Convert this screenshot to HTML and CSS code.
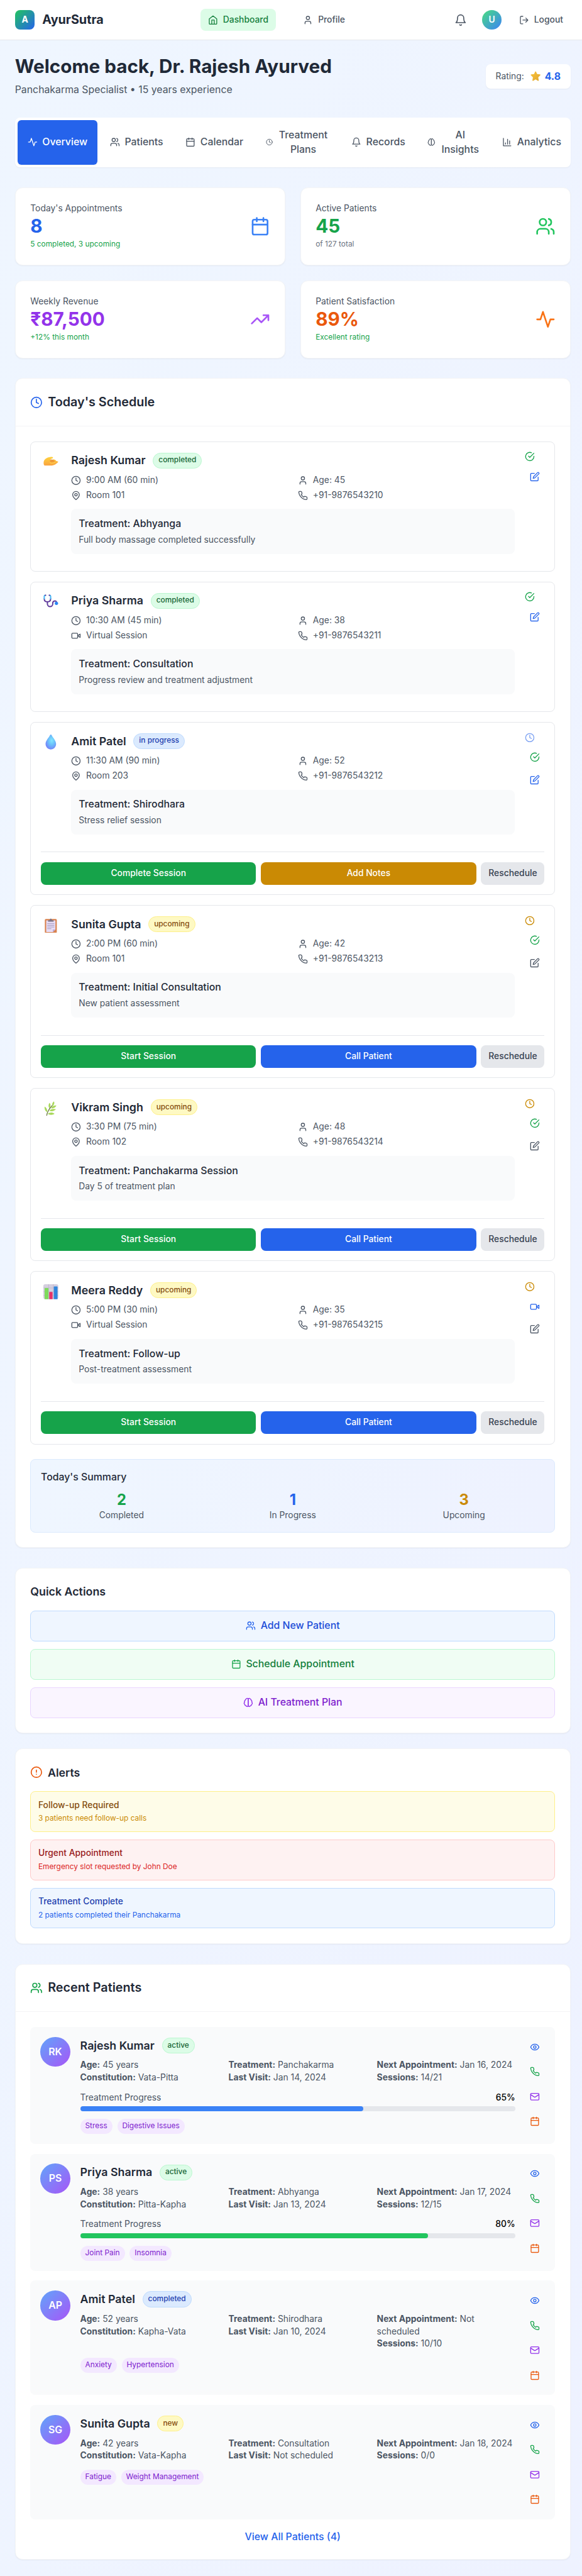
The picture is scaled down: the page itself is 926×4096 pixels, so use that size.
FILE: index.html
```html
<!DOCTYPE html>
<html lang="en">
<head>
<meta charset="utf-8">
<title>AyurSutra</title>
<link rel="stylesheet" href="styles.css">
</head>
<body>
<svg class="sprite" aria-hidden="true">
  <symbol id="home" viewBox="0 0 24 24"><path d="m3 9 9-7 9 7v11a2 2 0 0 1-2 2H5a2 2 0 0 1-2-2z"/><path d="M9 22V12h6v10"/></symbol>
  <symbol id="user" viewBox="0 0 24 24"><path d="M19 21v-2a4 4 0 0 0-4-4H9a4 4 0 0 0-4 4v2"/><circle cx="12" cy="7" r="4"/></symbol>
  <symbol id="users" viewBox="0 0 24 24"><path d="M16 21v-2a4 4 0 0 0-4-4H6a4 4 0 0 0-4 4v2"/><circle cx="9" cy="7" r="4"/><path d="M22 21v-2a4 4 0 0 0-3-3.87M16 3.13a4 4 0 0 1 0 7.75"/></symbol>
  <symbol id="bell" viewBox="0 0 24 24"><path d="M6 8a6 6 0 0 1 12 0c0 7 3 9 3 9H3s3-2 3-9"/><path d="M10.3 21a1.94 1.94 0 0 0 3.4 0"/></symbol>
  <symbol id="logout" viewBox="0 0 24 24"><path d="M9 21H5a2 2 0 0 1-2-2V5a2 2 0 0 1 2-2h4M16 17l5-5-5-5M21 12H9"/></symbol>
  <symbol id="activity" viewBox="0 0 24 24"><path d="M22 12h-4l-3 9L9 3l-3 9H2"/></symbol>
  <symbol id="calendar" viewBox="0 0 24 24"><rect x="3" y="4" width="18" height="18" rx="2"/><path d="M16 2v4M8 2v4M3 10h18"/></symbol>
  <symbol id="clock" viewBox="0 0 24 24"><circle cx="12" cy="12" r="10"/><path d="M12 6v6l4 2"/></symbol>
  <symbol id="brain" viewBox="0 0 24 24"><path d="M9.5 2A2.5 2.5 0 0 1 12 4.5v15a2.5 2.5 0 0 1-4.96.44 2.5 2.5 0 0 1-2.96-3.08 3 3 0 0 1-.34-5.58 2.5 2.5 0 0 1 1.32-4.24 2.5 2.5 0 0 1 1.98-3A2.5 2.5 0 0 1 9.5 2Z"/><path d="M14.5 2A2.5 2.5 0 0 0 12 4.5v15a2.5 2.5 0 0 0 4.96.44 2.5 2.5 0 0 0 2.96-3.08 3 3 0 0 0 .34-5.58 2.5 2.5 0 0 0-1.32-4.24 2.5 2.5 0 0 0-1.98-3A2.5 2.5 0 0 0 14.5 2Z"/></symbol>
  <symbol id="chart" viewBox="0 0 24 24"><path d="M3 3v18h18M18 17V9M13 17V5M8 17v-3"/></symbol>
  <symbol id="trend" viewBox="0 0 24 24"><path d="m22 7-8.500 8.500-5-5L2 17M16 7h6v6"/></symbol>
  <symbol id="pin" viewBox="0 0 24 24"><path d="M20 10c0 6-8 12-8 12s-8-6-8-12a8 8 0 0 1 16 0Z"/><circle cx="12" cy="10" r="3"/></symbol>
  <symbol id="phone" viewBox="0 0 24 24"><path d="M22 16.920v3a2 2 0 0 1-2.180 2 19.790 19.790 0 0 1-8.630-3.070 19.500 19.500 0 0 1-6-6 19.790 19.790 0 0 1-3.070-8.670A2 2 0 0 1 4.110 2h3a2 2 0 0 1 2 1.720 12.840 12.840 0 0 0 .7 2.810 2 2 0 0 1-.45 2.110L8.090 9.910a16 16 0 0 0 6 6l1.270-1.270a2 2 0 0 1 2.110-.45 12.840 12.840 0 0 0 2.810.7A2 2 0 0 1 22 16.920z"/></symbol>
  <symbol id="video" viewBox="0 0 24 24"><path d="m22 8-6 4 6 4V8Z"/><rect x="2" y="6" width="14" height="12" rx="2"/></symbol>
  <symbol id="check" viewBox="0 0 24 24"><path d="M22 11.080V12a10 10 0 1 1-5.930-9.140"/><path d="m22 4-10 10.010-3-3"/></symbol>
  <symbol id="edit" viewBox="0 0 24 24"><path d="M11 4H4a2 2 0 0 0-2 2v14a2 2 0 0 0 2 2h14a2 2 0 0 0 2-2v-7"/><path d="M18.500 2.500a2.120 2.120 0 0 1 3 3L12 15l-4 1 1-4Z"/></symbol>
  <symbol id="alert" viewBox="0 0 24 24"><circle cx="12" cy="12" r="10"/><path d="M12 8v4M12 16h.01"/></symbol>
  <symbol id="eye" viewBox="0 0 24 24"><path d="M2 12s3-7 10-7 10 7 10 7-3 7-10 7-10-7-10-7Z"/><circle cx="12" cy="12" r="3"/></symbol>
  <symbol id="mail" viewBox="0 0 24 24"><rect x="2" y="4" width="20" height="16" rx="2"/><path d="m22 7-8.970 5.700a1.940 1.940 0 0 1-2.060 0L2 7"/></symbol>
</svg>

<header class="topbar">
  <div class="brand"><span class="logo">A</span><span class="brand-name">AyurSutra</span></div>
  <nav class="nav">
    <a class="nav-link current"><svg class="i"><use href="#home"/></svg>Dashboard</a>
    <a class="nav-link"><svg class="i"><use href="#user"/></svg>Profile</a>
  </nav>
  <div class="account">
    <span class="bell"><svg class="i i20"><use href="#bell"/></svg></span>
    <span class="me">U</span>
    <a class="nav-link"><svg class="i"><use href="#logout"/></svg>Logout</a>
  </div>
</header>

<main class="page">
  <section class="welcome">
    <div>
      <h1>Welcome back, Dr. Rajesh Ayurved</h1>
      <p>Panchakarma Specialist • 15 years experience</p>
    </div>
    <div class="rating">
      <span>Rating:</span>
      <svg class="star" viewBox="0 0 24 24"><defs><linearGradient id="gs" x1="0" y1="0" x2="1" y2="1"><stop offset="0" stop-color="#f9c23c"/><stop offset="1" stop-color="#e0a72e"/></linearGradient></defs><path d="M10.900 1.500c.5-1 1.700-1 2.200 0l2.500 5.500 6.600.8c1.100.2 1.500 1.400.7 2.200l-4.700 4.600 1.200 6.700c.2 1.100-.9 1.900-1.900 1.400L12 19.400l-5.500 3.300c-1 .5-2.100-.3-1.900-1.400l1.200-6.700L1.100 10c-.8-.8-.4-2 .7-2.200l6.600-.8z" fill="url(#gs)"/></svg>
      <b>4.8</b>
    </div>
  </section>

  <nav class="tabs">
    <a class="tab on"><svg class="i"><use href="#activity"/></svg>Overview</a>
    <a class="tab"><svg class="i"><use href="#users"/></svg>Patients</a>
    <a class="tab"><svg class="i"><use href="#calendar"/></svg>Calendar</a>
    <a class="tab"><svg class="i i11"><use href="#clock"/></svg><span class="wide">Treatment Plans</span></a>
    <a class="tab"><svg class="i"><use href="#bell"/></svg>Records</a>
    <a class="tab"><svg class="i i12"><use href="#brain"/></svg><span class="narrow">AI Insights</span></a>
    <a class="tab"><svg class="i"><use href="#chart"/></svg>Analytics</a>
  </nav>

  <section class="stats">
    <div class="card stat"><div><p>Today's Appointments</p><strong class="blue">8</strong><small class="green">5 completed, 3 upcoming</small></div><svg class="i i32 blue5"><use href="#calendar"/></svg></div>
    <div class="card stat"><div><p>Active Patients</p><strong class="green">45</strong><small class="gray5">of 127 total</small></div><svg class="i i32 green5"><use href="#users"/></svg></div>
    <div class="card stat"><div><p>Weekly Revenue</p><strong class="purple">₹87,500</strong><small class="green">+12% this month</small></div><svg class="i i32 purple5"><use href="#trend"/></svg></div>
    <div class="card stat"><div><p>Patient Satisfaction</p><strong class="orange">89%</strong><small class="green">Excellent rating</small></div><svg class="i i32 orange5"><use href="#activity"/></svg></div>
  </section>

  <section class="card schedule">
    <h2 class="card-head"><svg class="i i20 blue"><use href="#clock"/></svg>Today's Schedule</h2>
    <div class="card-body">
      <div class="visits">
      <article class="visit">
        <div class="visit-row">
          <div class="emoji"><svg viewBox="0 0 24 24"><defs><linearGradient id="gh" x1="0" y1="0" x2="0" y2="1"><stop offset="0" stop-color="#ffd23e"/><stop offset="1" stop-color="#f9a33f"/></linearGradient></defs><path d="M.4 14C.6 9 4 6.500 8 5.300c2.500-.8 5.200-1.100 6.800-.4 1.200.6.8 2-.4 2.200-1.500.3-2.600.6-3 1.400l.3 1.500 4-1.300c2-.3 4.300.8 4.900 2.300 1.300.1 2.900.6 3.200 1.300.2.900-2.300 2.700-4.700 4.300-2 1.300-4.300 1.800-7 1.800H2c-1.300-.6-1.700-2.600-1.600-4.400z" fill="url(#gh)"/><path d="M10.500 10.800c1.200-2.200 2-2.600 2.600-2.200s.6.700 1.200.4.900.3 1.300.3.900.8 1.500.8.700 1.300 1.800 1.500l-3 1.300h-2.800c-1.300 0-2.500-.7-2.600-2.100z" fill="#e88a35" opacity=".75"/><path d="M10.500 13.500c2.500 2 6 1 9-.8" fill="none" stroke="#ffe05a" stroke-width=".8"/></svg></div>
          <div class="visit-main">
            <div class="who"><h3>Rajesh Kumar</h3><span class="badge b-green">completed</span></div>
            <div class="facts"><span><svg class="i"><use href="#clock"/></svg>9:00 AM (60 min)</span><span><svg class="i"><use href="#user"/></svg>Age: 45</span><span><svg class="i"><use href="#pin"/></svg>Room 101</span><span><svg class="i"><use href="#phone"/></svg>+91-9876543210</span></div>
            <div class="note"><h4>Treatment: Abhyanga</h4><p>Full body massage completed successfully</p></div>
          </div>
          <div class="side"><svg class="i green"><use href="#check"/></svg><div class="tools"><a class="blue"><svg class="i"><use href="#edit"/></svg></a></div></div>
        </div>
      </article>
      <article class="visit">
        <div class="visit-row">
          <div class="emoji"><svg viewBox="0 0 24 24" fill="none" stroke-width="2" stroke-linecap="round"><path d="M6.500 12v3.500a4.300 4.300 0 0 0 8.600 0V14a3.300 3.300 0 0 1 6.200-1.500" stroke="#5f3a9c"/><path d="M1.400 7c0 3 2 5 5.100 5s5.200-2 5.200-5" stroke="#5f3a9c"/><path d="M1.400 7.200V3.300q0-1.500 1.600-1.700M11.700 7.200V3.300q0-1.500-1.600-1.700" stroke="#44b6f5"/><path d="M3.200 1.500h.5M9.400 1.500h.5" stroke="#5f3a9c"/><circle cx="21" cy="14.500" r="2.700" fill="#2b86f5"/></svg></div>
          <div class="visit-main">
            <div class="who"><h3>Priya Sharma</h3><span class="badge b-green">completed</span></div>
            <div class="facts"><span><svg class="i"><use href="#clock"/></svg>10:30 AM (45 min)</span><span><svg class="i"><use href="#user"/></svg>Age: 38</span><span><svg class="i"><use href="#video"/></svg>Virtual Session</span><span><svg class="i"><use href="#phone"/></svg>+91-9876543211</span></div>
            <div class="note"><h4>Treatment: Consultation</h4><p>Progress review and treatment adjustment</p></div>
          </div>
          <div class="side"><svg class="i green"><use href="#check"/></svg><div class="tools"><a class="blue"><svg class="i"><use href="#edit"/></svg></a></div></div>
        </div>
      </article>
      <article class="visit">
        <div class="visit-row">
          <div class="emoji"><svg viewBox="0 0 24 24"><defs><radialGradient id="gd" cx=".58" cy=".4" r=".62"><stop offset="0" stop-color="#83e8ff"/><stop offset=".45" stop-color="#6cc4fb"/><stop offset="1" stop-color="#7385fa"/></radialGradient></defs><path d="M10.800.8c.5-1.100 1.900-1.100 2.400 0 1.800 4.200 7.300 8.700 7.300 14.600a8.500 8.500 0 0 1-17 0C3.500 9.500 9 5 10.800.8z" fill="url(#gd)"/></svg></div>
          <div class="visit-main">
            <div class="who"><h3>Amit Patel</h3><span class="badge b-blue">in progress</span></div>
            <div class="facts"><span><svg class="i"><use href="#clock"/></svg>11:30 AM (90 min)</span><span><svg class="i"><use href="#user"/></svg>Age: 52</span><span><svg class="i"><use href="#pin"/></svg>Room 203</span><span><svg class="i"><use href="#phone"/></svg>+91-9876543212</span></div>
            <div class="note"><h4>Treatment: Shirodhara</h4><p>Stress relief session</p></div>
          </div>
          <div class="side"><svg class="i blue pulse"><use href="#clock"/></svg><div class="tools"><a class="green"><svg class="i"><use href="#check"/></svg></a><a class="blue"><svg class="i"><use href="#edit"/></svg></a></div></div>
        </div>
        <div class="buttons"><a class="btn bg-green">Complete Session</a><a class="btn bg-yellow">Add Notes</a><a class="btn bg-gray">Reschedule</a></div>
      </article>
      <article class="visit">
        <div class="visit-row">
          <div class="emoji"><svg viewBox="0 0 24 24"><rect x="2.400" y="1.200" width="19.200" height="22.600" rx="1.600" fill="#d9824f"/><path d="M4.600 3.600h14.800v14.700l-4.200 3.900H4.600z" fill="#e6dcf5"/><path d="M15.200 22.200v-3.900h4.200z" fill="#b9a9d6"/><path d="M7.500 5.500V3.200h2.700q.2-2.800 1.800-2.800t1.800 2.800h2.700v2.300z" fill="#7c7488"/><path d="M6.300 8.800h11.400M6.300 11.500h11.400M6.300 14.200h11.400M6.300 16.900h6.500" stroke="#a498bc" stroke-width="1"/></svg></div>
          <div class="visit-main">
            <div class="who"><h3>Sunita Gupta</h3><span class="badge b-yellow">upcoming</span></div>
            <div class="facts"><span><svg class="i"><use href="#clock"/></svg>2:00 PM (60 min)</span><span><svg class="i"><use href="#user"/></svg>Age: 42</span><span><svg class="i"><use href="#pin"/></svg>Room 101</span><span><svg class="i"><use href="#phone"/></svg>+91-9876543213</span></div>
            <div class="note"><h4>Treatment: Initial Consultation</h4><p>New patient assessment</p></div>
          </div>
          <div class="side"><svg class="i yellow"><use href="#clock"/></svg><div class="tools"><a class="green"><svg class="i"><use href="#check"/></svg></a><a class="gray"><svg class="i"><use href="#edit"/></svg></a></div></div>
        </div>
        <div class="buttons"><a class="btn bg-green">Start Session</a><a class="btn bg-blue">Call Patient</a><a class="btn bg-gray">Reschedule</a></div>
      </article>
      <article class="visit">
        <div class="visit-row">
          <div class="emoji"><svg viewBox="0 0 24 24"><path d="M5.300 23.500C6 16 10 11 15.500 5.500" fill="none" stroke="#6b7a45" stroke-width="1.300" stroke-linecap="round"/><path d="M14.300 7.800c-.7-3.500.5-6 2.800-7.500 1.300 3 .4 5.800-2.800 7.500zM9.500 11.500C7.600 8 8.200 4.800 10 2.500c2 2.700 2.200 6-.5 9zM6.200 17.500C2.800 15.800 1.600 12.500 2 8.500c3 1.700 4.600 4.900 4.200 9zM12.500 11.500c1-3.500 4-5 8.500-4.600-1.500 3.200-4.500 5-8.500 4.600zM9.500 15.500c2.500-3 6-4 10.800-2.500-2.700 3-6.400 4-10.800 2.500zM7 20.300c3.500-2.600 7-2.900 11-.1-3.500 2.200-7.400 2.400-11 .1z" fill="#a9d85b"/></svg></div>
          <div class="visit-main">
            <div class="who"><h3>Vikram Singh</h3><span class="badge b-yellow">upcoming</span></div>
            <div class="facts"><span><svg class="i"><use href="#clock"/></svg>3:30 PM (75 min)</span><span><svg class="i"><use href="#user"/></svg>Age: 48</span><span><svg class="i"><use href="#pin"/></svg>Room 102</span><span><svg class="i"><use href="#phone"/></svg>+91-9876543214</span></div>
            <div class="note"><h4>Treatment: Panchakarma Session</h4><p>Day 5 of treatment plan</p></div>
          </div>
          <div class="side"><svg class="i yellow"><use href="#clock"/></svg><div class="tools"><a class="green"><svg class="i"><use href="#check"/></svg></a><a class="gray"><svg class="i"><use href="#edit"/></svg></a></div></div>
        </div>
        <div class="buttons"><a class="btn bg-green">Start Session</a><a class="btn bg-blue">Call Patient</a><a class="btn bg-gray">Reschedule</a></div>
      </article>
      <article class="visit">
        <div class="visit-row">
          <div class="emoji"><svg viewBox="0 0 24 24"><rect width="24" height="24" rx="3" fill="#d5cfdf"/><path d="M0 6h24M0 12h24M0 18h24M8.500 0v24M16 0v24" stroke="#b9b1c8" stroke-width=".7"/><path d="M2 24V7q0-1 1-1h4.200q1 0 1 1v17z" fill="#7edb5c"/><path d="M9.400 24V13.500q0-1 1-1h3.400q1 0 1 1V24z" fill="#e63368"/><path d="M16.800 24V4.500q0-1 1-1h4q1 0 1 1V24z" fill="#2f86dc"/></svg></div>
          <div class="visit-main">
            <div class="who"><h3>Meera Reddy</h3><span class="badge b-yellow">upcoming</span></div>
            <div class="facts"><span><svg class="i"><use href="#clock"/></svg>5:00 PM (30 min)</span><span><svg class="i"><use href="#user"/></svg>Age: 35</span><span><svg class="i"><use href="#video"/></svg>Virtual Session</span><span><svg class="i"><use href="#phone"/></svg>+91-9876543215</span></div>
            <div class="note"><h4>Treatment: Follow-up</h4><p>Post-treatment assessment</p></div>
          </div>
          <div class="side"><svg class="i yellow"><use href="#clock"/></svg><div class="tools"><a class="blue"><svg class="i"><use href="#video"/></svg></a><a class="gray"><svg class="i"><use href="#edit"/></svg></a></div></div>
        </div>
        <div class="buttons"><a class="btn bg-green">Start Session</a><a class="btn bg-blue">Call Patient</a><a class="btn bg-gray">Reschedule</a></div>
      </article>
      </div>
      <div class="summary">
        <h4>Today's Summary</h4>
        <div class="totals">
          <div><strong class="green">2</strong><span>Completed</span></div>
          <div><strong class="blue">1</strong><span>In Progress</span></div>
          <div><strong class="yellow">3</strong><span>Upcoming</span></div>
        </div>
      </div>
    </div>
  </section>

  <section class="card panel quick">
    <h3>Quick Actions</h3>
    <a class="action a-blue"><svg class="i blue"><use href="#users"/></svg>Add New Patient</a>
    <a class="action a-green"><svg class="i green"><use href="#calendar"/></svg>Schedule Appointment</a>
    <a class="action a-purple"><svg class="i purple"><use href="#brain"/></svg>AI Treatment Plan</a>
  </section>

  <section class="card panel alerts">
    <h3><svg class="i i20 orange"><use href="#alert"/></svg>Alerts</h3>
    <div class="alert al-yellow"><p>Follow-up Required</p><small>3 patients need follow-up calls</small></div>
    <div class="alert al-red"><p>Urgent Appointment</p><small>Emergency slot requested by John Doe</small></div>
    <div class="alert al-blue"><p>Treatment Complete</p><small>2 patients completed their Panchakarma</small></div>
  </section>

  <section class="card recent">
    <h2 class="card-head"><svg class="i i20 green"><use href="#users"/></svg>Recent Patients</h2>
    <div class="card-body">
      <div class="patients">
      <article class="patient">
        <span class="avatar">RK</span>
        <div class="patient-main">
          <div class="who"><h3>Rajesh Kumar</h3><span class="badge b-green">active</span></div>
          <div class="details">
            <div><p><b>Age:</b> 45 years</p><p><b>Constitution:</b> Vata-Pitta</p></div>
            <div><p><b>Treatment:</b> Panchakarma</p><p><b>Last Visit:</b> Jan 14, 2024</p></div>
            <div><p><b>Next Appointment:</b> Jan 16, 2024</p><p><b>Sessions:</b> 14/21</p></div>
          </div>
          <div class="progress"><div class="progress-label"><span>Treatment Progress</span><em>65%</em></div><div class="track"><div class="fill fill-blue" style="width:65%"></div></div></div>
          <div class="tags"><span>Stress</span><span>Digestive Issues</span></div>
        </div>
        <div class="contact"><a class="blue"><svg class="i"><use href="#eye"/></svg></a><a class="green"><svg class="i"><use href="#phone"/></svg></a><a class="purple"><svg class="i"><use href="#mail"/></svg></a><a class="orange"><svg class="i"><use href="#calendar"/></svg></a></div>
      </article>
      <article class="patient">
        <span class="avatar">PS</span>
        <div class="patient-main">
          <div class="who"><h3>Priya Sharma</h3><span class="badge b-green">active</span></div>
          <div class="details">
            <div><p><b>Age:</b> 38 years</p><p><b>Constitution:</b> Pitta-Kapha</p></div>
            <div><p><b>Treatment:</b> Abhyanga</p><p><b>Last Visit:</b> Jan 13, 2024</p></div>
            <div><p><b>Next Appointment:</b> Jan 17, 2024</p><p><b>Sessions:</b> 12/15</p></div>
          </div>
          <div class="progress"><div class="progress-label"><span>Treatment Progress</span><em>80%</em></div><div class="track"><div class="fill fill-green" style="width:80%"></div></div></div>
          <div class="tags"><span>Joint Pain</span><span>Insomnia</span></div>
        </div>
        <div class="contact"><a class="blue"><svg class="i"><use href="#eye"/></svg></a><a class="green"><svg class="i"><use href="#phone"/></svg></a><a class="purple"><svg class="i"><use href="#mail"/></svg></a><a class="orange"><svg class="i"><use href="#calendar"/></svg></a></div>
      </article>
      <article class="patient">
        <span class="avatar">AP</span>
        <div class="patient-main">
          <div class="who"><h3>Amit Patel</h3><span class="badge b-blue">completed</span></div>
          <div class="details">
            <div><p><b>Age:</b> 52 years</p><p><b>Constitution:</b> Kapha-Vata</p></div>
            <div><p><b>Treatment:</b> Shirodhara</p><p><b>Last Visit:</b> Jan 10, 2024</p></div>
            <div><p><b>Next Appointment:</b> Not scheduled</p><p><b>Sessions:</b> 10/10</p></div>
          </div>
          <div class="tags"><span>Anxiety</span><span>Hypertension</span></div>
        </div>
        <div class="contact"><a class="blue"><svg class="i"><use href="#eye"/></svg></a><a class="green"><svg class="i"><use href="#phone"/></svg></a><a class="purple"><svg class="i"><use href="#mail"/></svg></a><a class="orange"><svg class="i"><use href="#calendar"/></svg></a></div>
      </article>
      <article class="patient">
        <span class="avatar">SG</span>
        <div class="patient-main">
          <div class="who"><h3>Sunita Gupta</h3><span class="badge b-yellow">new</span></div>
          <div class="details">
            <div><p><b>Age:</b> 42 years</p><p><b>Constitution:</b> Vata-Kapha</p></div>
            <div><p><b>Treatment:</b> Consultation</p><p><b>Last Visit:</b> Not scheduled</p></div>
            <div><p><b>Next Appointment:</b> Jan 18, 2024</p><p><b>Sessions:</b> 0/0</p></div>
          </div>
          <div class="tags"><span>Fatigue</span><span>Weight Management</span></div>
        </div>
        <div class="contact"><a class="blue"><svg class="i"><use href="#eye"/></svg></a><a class="green"><svg class="i"><use href="#phone"/></svg></a><a class="purple"><svg class="i"><use href="#mail"/></svg></a><a class="orange"><svg class="i"><use href="#calendar"/></svg></a></div>
      </article>
      </div>
      <a class="view-all">View All Patients (4)</a>
    </div>
  </section>
</main>
</body>
</html>
```
FILE: styles.css
```css
:root { font-size: 15.83px; --e: .21px; }
* { box-sizing: border-box; margin: 0; padding: 0; }
body {
  font-family: Inter, "Liberation Sans", sans-serif;
  font-size: 1rem;
  line-height: 1.5rem;
  color: #1f2937;
  background: linear-gradient(to bottom right, #eff6ff, #eef2ff);
  min-height: 4096px;
  overflow-x: hidden;
}
h1, h2, h3, h4 { font-size: inherit; }
.sprite { display: none; }
.i {
  width: 1rem; height: 1rem; flex: none; display: block;
  fill: none; stroke: currentColor; stroke-width: 2;
  stroke-linecap: round; stroke-linejoin: round;
}
.i11 { width: .7rem; }
.i12 { width: .8rem; }
.i20 { width: 1.25rem; height: 1.25rem; }
.i32 { width: 2rem; height: 2rem; }

.blue { color: #2563eb; }
.green { color: #16a34a; }
.purple { color: #9333ea; }
.orange { color: #ea580c; }
.yellow { color: #ca8a04; }
.gray { color: #4b5563; }
.gray5 { color: #6b7280; }
.blue5 { color: #3b82f6; }
.green5 { color: #22c55e; }
.purple5 { color: #a855f7; }
.orange5 { color: #f97316; }
.pulse { opacity: .6; }

/* top bar */
.topbar {
  height: 4.05rem; padding: 0 1.15rem 0 1.5rem;
  display: flex; align-items: center; justify-content: space-between;
  background: #fff; border-bottom: 1px solid #e5e7eb;
}
.brand, .nav, .account { display: flex; align-items: center; }
.brand { gap: .75rem; }
.logo {
  width: 2rem; height: 2rem; border-radius: .5rem;
  display: grid; place-items: center;
  color: #fff; font-weight: 700; font-size: .875rem;
  background: linear-gradient(to bottom right, #22c55e, #2563eb);
}
.brand-name { font-size: 1.25rem; font-weight: 700; }
.nav { gap: 2rem; }
.nav-link {
  display: flex; align-items: center; gap: .5rem;
  padding: .5rem .75rem; border-radius: .5rem;
  font-size: .875rem; line-height: 1.25rem; font-weight: 500; color: #4b5563;
}
.nav-link.current { background: #dcfce7; color: #15803d; }
.account { gap: 1rem; }
.bell { padding: .5rem; color: #4b5563; }
.me {
  width: 2rem; height: 2rem; border-radius: 50%;
  display: grid; place-items: center;
  color: #fff; font-weight: 600; font-size: .875rem;
  background: linear-gradient(to bottom right, #4ade80, #3b82f6);
}

/* page */
.page { padding: 1.5rem 1.15rem 1.5rem 1.5rem; }
.welcome { display: flex; align-items: center; justify-content: space-between; margin-bottom: 2rem; }
.welcome h1 { font-size: 1.875rem; line-height: 2.25rem; font-weight: 700; }
.welcome p { margin-top: .5rem; color: #4b5563; }
.rating {
  display: flex; align-items: center; padding: .5rem 1rem;
  background: #fff; border-radius: .5rem; box-shadow: 0 1px 2px rgba(0,0,0,.05);
}
.rating span { font-size: .875rem; line-height: 1.25rem; color: #4b5563; }
.rating b { font-weight: 700; color: #2563eb; margin-left: .4rem; }
.star { width: 1.03rem; height: 1.03rem; margin-left: .65rem; }

.tabs {
  display: flex; gap: .25rem; padding: .25rem; margin-bottom: 2rem;
  background: #fff; border-radius: .5rem; box-shadow: 0 1px 2px rgba(0,0,0,.05);
}
.tab {
  flex: none; display: flex; align-items: center; gap: .5rem;
  padding: .75rem 1rem; border-radius: .375rem;
  font-weight: 500; color: #4b5563; text-align: center; min-height: 4.5rem;
}
.tab.on { background: #2563eb; color: #fff; box-shadow: 0 1px 2px rgba(0,0,0,.05); }
.wide { width: 5.15rem; }
.narrow { width: 3.95rem; }

.card {
  background: #fff; border: 1px solid #f3f4f6; border-radius: .75rem;
  box-shadow: 0 1px 2px rgba(0,0,0,.05);
}
.stats { display: grid; grid-template-columns: 1fr 1fr; gap: 1.5rem; margin-bottom: 2rem; }
.stat { display: flex; align-items: center; justify-content: space-between; padding: calc(1.5rem - var(--e)); }
.stat p { font-size: .875rem; line-height: 1.25rem; color: #4b5563; }
.stat strong { display: block; font-size: 1.875rem; line-height: 2.25rem; font-weight: 700; }
.stat small { display: block; font-size: .75rem; line-height: 1rem; margin-top: .25rem; }

.card-head {
  display: flex; align-items: center; gap: .5rem;
  padding: calc(1.5rem - var(--e)) 1.5rem;
  font-size: 1.25rem; line-height: 1.75rem; font-weight: 600;
  border-bottom: 1px solid #f3f4f6;
}
.card-body { padding: calc(1.5rem - var(--e)) 1.5rem; }

/* schedule */
.schedule { margin-bottom: 2rem; }
.visits { display: flex; flex-direction: column; gap: 1rem; }
.visit { border: 1px solid #e5e7eb; border-radius: .5rem; padding: calc(1rem - var(--e)); }
.visit-row { display: flex; align-items: flex-start; gap: 1rem; }
.emoji { width: 2.05rem; height: 2rem; display: grid; place-items: center; flex: none; }
.emoji svg { width: 1.5rem; height: 1.5rem; }
.visit-main { flex: 1; }
.who { display: flex; align-items: center; gap: .75rem; height: 1.75rem; margin-bottom: .5rem; }
.who h3 { font-size: 1.125rem; line-height: 1.75rem; font-weight: 600; }
.badge {
  font-size: .75rem; line-height: 1rem; font-weight: 500;
  padding: calc(.25rem - var(--e)) .5rem; border: 1px solid; border-radius: 1rem;
}
.b-green { background: #dcfce7; border-color: #bbf7d0; color: #166534; }
.b-blue { background: #dbeafe; border-color: #bfdbfe; color: #1e40af; }
.b-yellow { background: #fef9c3; border-color: #fef08a; color: #854d0e; }
.facts {
  display: grid; grid-template-columns: 1fr 1fr; gap: .25rem 1rem;
  font-size: .875rem; line-height: 1.25rem; color: #4b5563; margin-bottom: .75rem;
}
.facts span { display: flex; align-items: center; gap: .5rem; }
.note { background: #f9fafb; border-radius: .5rem; padding: .75rem; margin-bottom: .75rem; }
.note h4 { font-weight: 500; }
.note p { font-size: .875rem; line-height: 1.25rem; color: #4b5563; margin-top: .25rem; }
.side { display: flex; flex-direction: column; gap: .5rem; width: 2rem; }
.tools { display: flex; flex-direction: column; gap: .25rem; }
.tools a, .contact a { padding: .5rem; display: block; }
.buttons {
  display: flex; gap: .5rem; margin-top: 1rem;
  padding-top: calc(1rem - var(--e)); border-top: 1px solid #e5e7eb;
}
.btn {
  flex: 1; text-align: center; padding: .5rem .75rem; border-radius: .5rem;
  font-size: .875rem; line-height: 1.25rem; font-weight: 500; color: #fff;
}
.bg-green { background: #16a34a; }
.bg-blue { background: #2563eb; }
.bg-yellow { background: #ca8a04; }
.bg-gray { flex: none; background: #e5e7eb; color: #374151; }

.summary {
  margin-top: 1.5rem; padding: calc(1rem - var(--e));
  border: 1px solid #dbeafe; border-radius: .5rem;
  background: linear-gradient(to right, #eff6ff, #eef2ff);
}
.summary h4 { font-weight: 500; margin-bottom: .5rem; }
.totals { display: grid; grid-template-columns: repeat(3, 1fr); gap: 1rem; text-align: center; }
.totals strong { display: block; font-size: 1.5rem; line-height: 2rem; font-weight: 700; }
.totals span { display: block; font-size: .875rem; line-height: 1.25rem; color: #4b5563; }

/* quick actions and alerts */
.panel { padding: calc(1.5rem - var(--e)); display: flex; flex-direction: column; gap: .75rem; }
.panel h3 {
  display: flex; align-items: center; gap: .5rem; margin-bottom: .25rem;
  font-size: 1.125rem; line-height: 1.75rem; font-weight: 600;
}
.quick { margin-bottom: 1.5rem; }
.alerts { margin-bottom: 2rem; }
.action {
  display: flex; align-items: center; justify-content: center; gap: .5rem;
  padding: calc(.75rem - var(--e)); border: 1px solid; border-radius: .5rem; font-weight: 500;
}
.a-blue { background: #eff6ff; border-color: #bfdbfe; color: #1d4ed8; }
.a-green { background: #f0fdf4; border-color: #bbf7d0; color: #15803d; }
.a-purple { background: #faf5ff; border-color: #e9d5ff; color: #7e22ce; }
.alert { padding: calc(.75rem - var(--e)); border: 1px solid; border-radius: .5rem; }
.alert p { font-size: .875rem; line-height: 1.25rem; font-weight: 500; }
.alert small { display: block; font-size: .75rem; line-height: 1rem; margin-top: .25rem; }
.al-yellow { background: #fefce8; border-color: #fef08a; color: #854d0e; }
.al-yellow small { color: #ca8a04; }
.al-red { background: #fef2f2; border-color: #fecaca; color: #991b1b; }
.al-red small { color: #dc2626; }
.al-blue { background: #eff6ff; border-color: #bfdbfe; color: #1e40af; }
.al-blue small { color: #2563eb; }

/* recent patients */
.patients { display: flex; flex-direction: column; gap: 1rem; }
.patient { display: flex; align-items: flex-start; gap: 1rem; padding: 1rem; background: #f9fafb; border-radius: .5rem; }
.avatar {
  width: 3rem; height: 3rem; flex: none; border-radius: 50%;
  display: grid; place-items: center; color: #fff; font-weight: 600;
  background: linear-gradient(to bottom right, #60a5fa, #a855f7);
}
.patient-main { flex: 1; min-width: 0; }
.details {
  display: grid; grid-template-columns: repeat(3, 1fr); gap: 1rem;
  font-size: .875rem; line-height: 1.25rem; color: #4b5563; margin-bottom: .75rem;
}
.details b { font-weight: 700; }
.progress { margin-bottom: .75rem; }
.progress-label {
  display: flex; justify-content: space-between; margin-bottom: .25rem;
  font-size: .875rem; line-height: 1.25rem; color: #4b5563;
}
.progress-label em { font-style: normal; font-weight: 500; color: #000; }
.track { height: .5rem; border-radius: .25rem; background: #e5e7eb; }
.fill { height: 100%; border-radius: .25rem; }
.fill-blue { background: #3b82f6; }
.fill-green { background: #22c55e; }
.tags { display: flex; gap: .5rem; }
.tags span {
  padding: .25rem .5rem; border-radius: 1rem;
  font-size: .75rem; line-height: 1rem; background: #f3e8ff; color: #7e22ce;
}
.contact { display: flex; flex-direction: column; gap: .5rem; width: 2rem; }
.view-all { display: block; margin-top: 1rem; text-align: center; font-weight: 500; color: #2563eb; }
```
